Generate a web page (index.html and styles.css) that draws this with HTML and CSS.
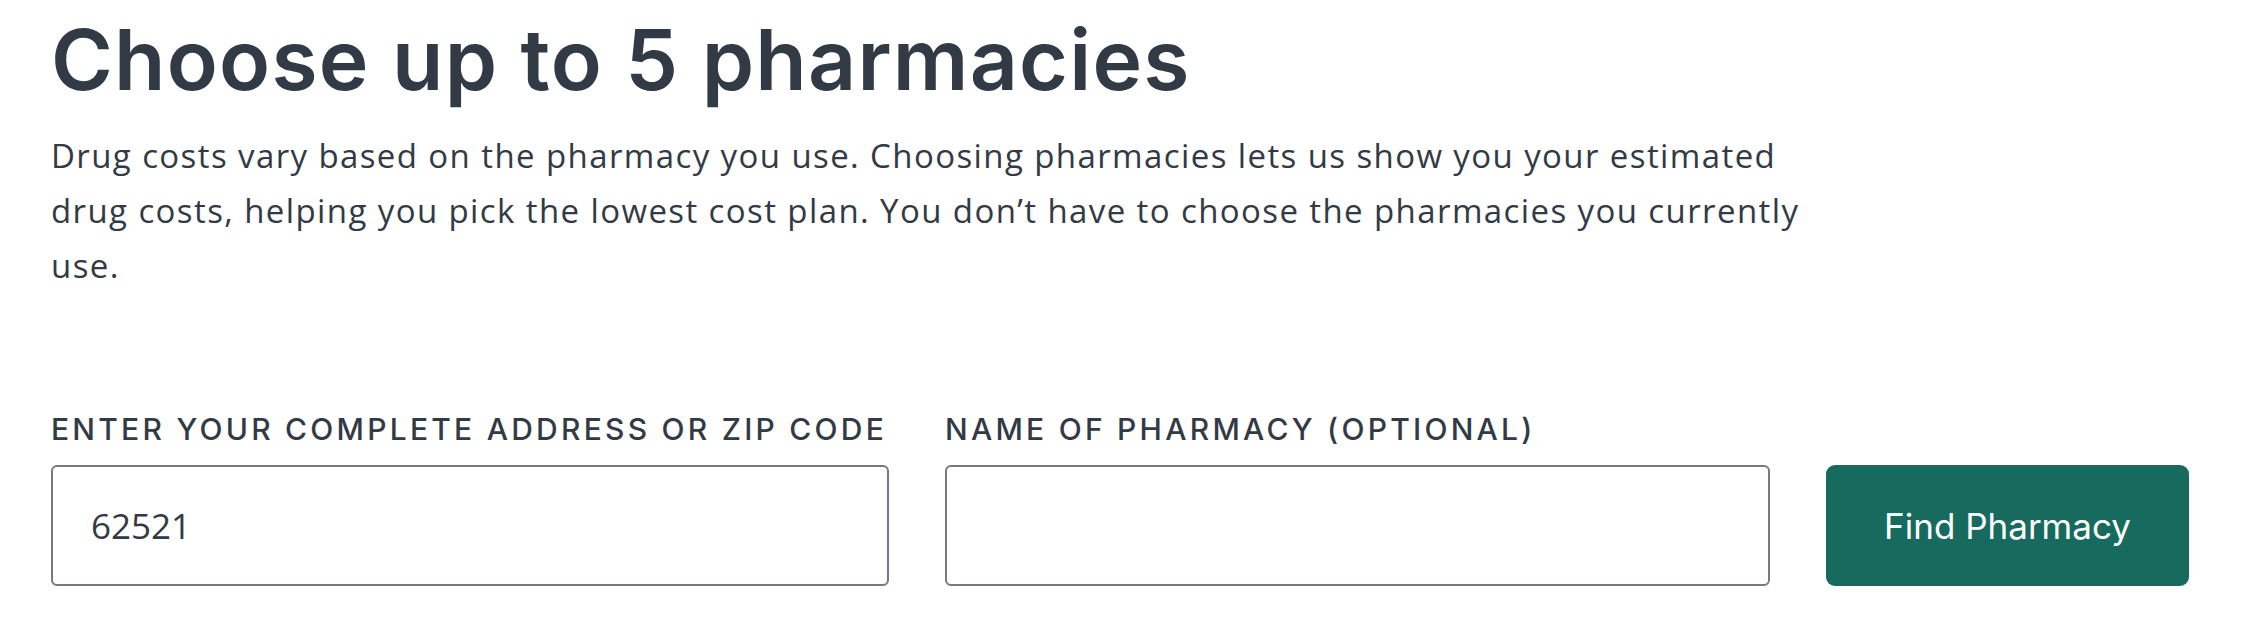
FILE: index.html
```html
<!DOCTYPE html>
<html lang="en">
<head>
<meta charset="utf-8">
<title>Choose up to 5 pharmacies</title>
<link rel="stylesheet" href="styles.css">
</head>
<body>
<main class="page">
  <h1 class="title">Choose up to 5 pharmacies</h1>
  <p class="intro">Drug costs vary based on the pharmacy you use. Choosing pharmacies lets us show you your estimated drug costs, helping you pick the lowest cost plan. You don’t have to choose the pharmacies you currently use.</p>
  <form class="search">
    <div class="field field-address">
      <label class="label" for="address">Enter your complete address or zip code</label>
      <input class="input" id="address" type="text" value="62521">
    </div>
    <div class="field field-name">
      <label class="label" for="pharmacy">Name of pharmacy (optional)</label>
      <input class="input" id="pharmacy" type="text" value="">
    </div>
    <div class="field field-action">
      <button class="btn" type="button">Find Pharmacy</button>
    </div>
  </form>
</main>
</body>
</html>
```

FILE: styles.css
```css
html, body {
  margin: 0;
  padding: 0;
  background: #ffffff;
}

.page {
  padding: 0 58px 0 51px;
  color: #323a46;
  font-family: Inter, "Open Sans", sans-serif;
}

.title {
  margin: 0;
  padding-top: 10px;
  font-family: Inter, sans-serif;
  font-weight: 600;
  font-size: 84px;
  line-height: 100px;
  letter-spacing: 1.2px;
  color: #323a46;
}

.intro {
  margin: 18px 0 0 0;
  max-width: 1765px;
  font-family: "Open Sans", sans-serif;
  font-size: 33px;
  line-height: 55px;
  letter-spacing: 1.4px;
  color: #323a46;
}

.search {
  display: flex;
  align-items: flex-end;
  gap: 56px;
  margin-top: 118px;
}

.field {
  display: flex;
  flex-direction: column;
}

.field-address { flex: 0 0 838px; }
.field-name { flex: 0 0 825px; }
.field-action { flex: 0 0 363px; }

.label {
  display: block;
  margin-bottom: 18px;
  font-family: Inter, sans-serif;
  font-weight: 500;
  font-size: 30px;
  line-height: 36px;
  letter-spacing: 3.25px;
  white-space: nowrap;
  text-transform: uppercase;
  color: #323a46;
}

.input {
  box-sizing: border-box;
  height: 121px;
  width: 100%;
  margin: 0;
  padding: 0 38px;
  border: 2px solid #767882;
  border-radius: 6px;
  background: #ffffff;
  font-family: "Open Sans", sans-serif;
  font-size: 35px;
  color: #323a46;
  outline: none;
}

.btn {
  box-sizing: border-box;
  height: 121px;
  width: 100%;
  margin: 0;
  border: none;
  border-radius: 9px;
  background: #176b5e;
  color: #ffffff;
  font-family: Inter, sans-serif;
  font-weight: 400;
  font-size: 35px;
  cursor: pointer;
}
```
